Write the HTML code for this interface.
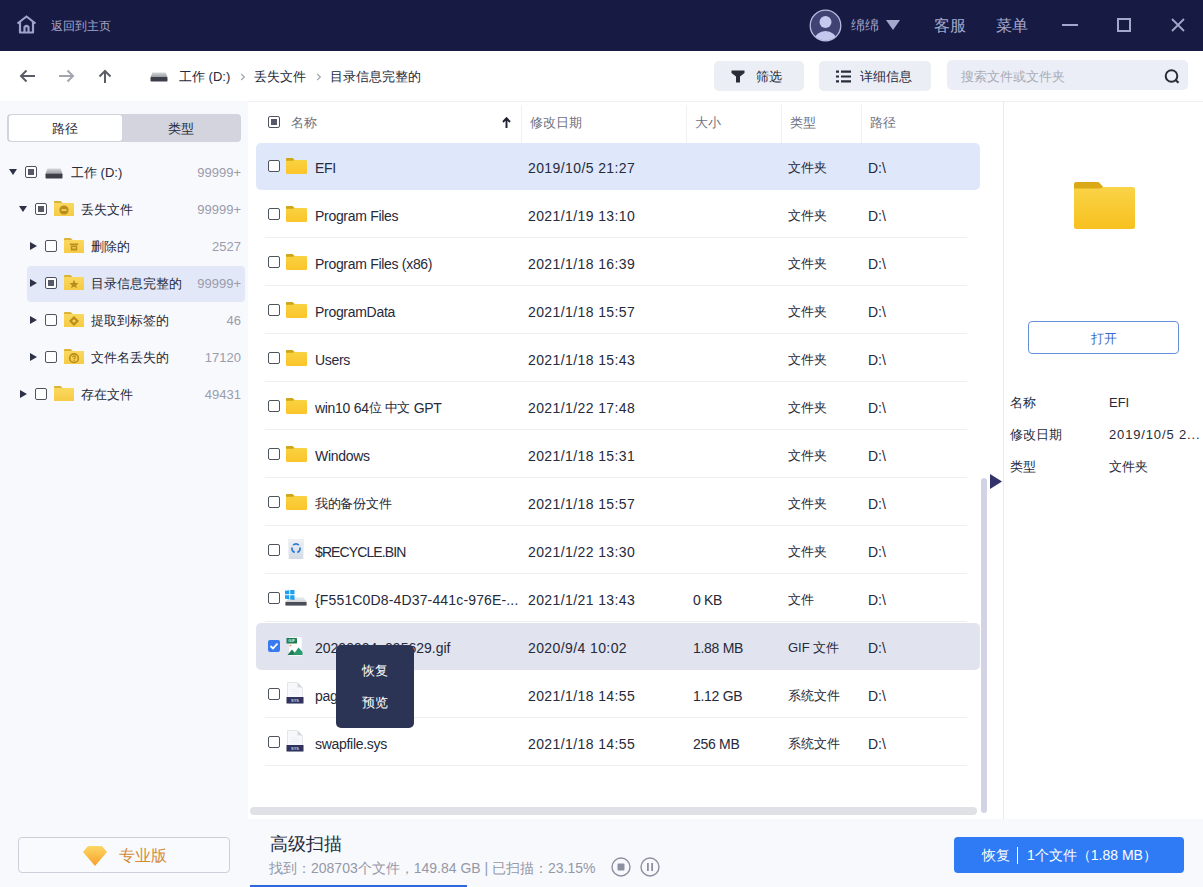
<!DOCTYPE html>
<html><head><meta charset="utf-8">
<style>
*{margin:0;padding:0;box-sizing:border-box}
html,body{width:1203px;height:887px;overflow:hidden;background:#fff;font-family:"Liberation Sans",sans-serif;color:#262a3a}
.abs{position:absolute}
.t{position:absolute;white-space:nowrap}
#hdr{position:absolute;left:0;top:0;width:1203px;height:51px;background:#171b43}
.ht{position:absolute;color:#a4a7cc;white-space:nowrap}
#tb{position:absolute;left:0;top:51px;width:1203px;height:50px;background:#fff}
#left{position:absolute;left:0;top:101px;width:248px;height:719px;background:#f8f9fd}
#main{position:absolute;left:248px;top:101px;width:755px;height:718px;background:#fff}
#topline{position:absolute;left:248px;top:101px;width:955px;height:1px;background:#eef0f4}
#right{position:absolute;left:1003px;top:101px;width:200px;height:718px;background:#fff;border-left:1px solid #e8eaf0;border-top:1px solid #eef0f4}
#bot{position:absolute;left:0;top:819px;width:1203px;height:68px;background:#f7f9fd}
.btn{position:absolute;background:#eceef5;border-radius:5px}
.cb{position:absolute;width:12px;height:12px;border:1.5px solid #4f535d;border-radius:2px;background:#fff}
.cb.p::after{content:"";position:absolute;left:1.5px;top:1.5px;width:6px;height:6px;background:#555a66}
.tri-d{position:absolute;width:0;height:0;border-left:4.5px solid transparent;border-right:4.5px solid transparent;border-top:6px solid #2e3247}
.tri-r{position:absolute;width:0;height:0;border-top:4px solid transparent;border-bottom:4px solid transparent;border-left:7px solid #2e3247}
.tr{position:absolute;font-size:13px;line-height:37px;height:37px;white-space:nowrap}
.cnt{position:absolute;right:7px;font-size:13px;color:#9a9cab;line-height:37px;text-align:right}
.row{position:absolute;left:0;width:755px;height:48px}
.row .c{position:absolute;white-space:nowrap;line-height:48px;font-size:14px;top:1px}
.row .dt{letter-spacing:0.4px}
.row .ty{font-size:13px}
.row .sz{letter-spacing:-0.3px}
.z{font-size:13px;position:relative;top:-1.5px}
.row .nm{letter-spacing:-0.3px}
.sep{position:absolute;left:17px;width:702px;height:1px;background:#eceef2}
.colsep{position:absolute;top:4px;width:1px;height:38px;background:#f0f1f5}
.hd{position:absolute;top:1px;line-height:42px;font-size:13px;color:#6e7180;white-space:nowrap}
</style></head><body>
<svg width="0" height="0" style="position:absolute"><defs><linearGradient id="dvg" x1="0" y1="0" x2="0" y2="1"><stop offset="0" stop-color="#d6d7da"/><stop offset="1" stop-color="#9c9ea4"/></linearGradient><linearGradient id="tfg" x1="0" y1="0" x2="0" y2="1"><stop offset="0" stop-color="#fada62"/><stop offset="1" stop-color="#f6cb45"/></linearGradient><linearGradient id="fg" x1="0" y1="0" x2="0" y2="1"><stop offset="0" stop-color="#f8d444"/><stop offset="1" stop-color="#fcc42a"/></linearGradient></defs></svg>
<div id="hdr">
  <svg class="abs" style="left:16px;top:15px" width="21" height="19" viewBox="0 0 21 19">
    <path d="M1.5 8.5 L10.5 1.5 L19.5 8.5 M4 7 V17.5 H17 V7 M8.5 17.5 V12 Q10.5 10 12.5 12 V17.5" fill="none" stroke="#9fa2cb" stroke-width="2.2" stroke-linejoin="round"/>
  </svg>
  <div class="ht" style="left:51px;top:18px;font-size:12px">返回到主页</div>
  <svg class="abs" style="left:809px;top:9px" width="33" height="33" viewBox="0 0 33 33">
    <defs><clipPath id="av"><circle cx="16.5" cy="16.5" r="15"/></clipPath></defs>
    <circle cx="16.5" cy="16.5" r="15.3" fill="#3f4273" stroke="#b9bce0" stroke-width="1.3"/>
    <g clip-path="url(#av)"><circle cx="16.5" cy="13" r="6" fill="#c5c8ee"/><ellipse cx="16.5" cy="31" rx="11" ry="9" fill="#c5c8ee"/></g>
  </svg>
  <div class="ht" style="left:851px;top:17px;font-size:14px">绵绵</div>
  <svg class="abs" style="left:886px;top:20px" width="14" height="11"><path d="M0 0 H14 L7 10 Z" fill="#a4a7cc"/></svg>
  <div class="ht" style="left:934px;top:16px;font-size:16px">客服</div>
  <div class="ht" style="left:996px;top:16px;font-size:16px">菜单</div>
  <div class="abs" style="left:1062px;top:24px;width:16px;height:2px;background:#a4a7cc"></div>
  <div class="abs" style="left:1117px;top:18px;width:14px;height:14px;border:2px solid #a4a7cc"></div>
  <svg class="abs" style="left:1171px;top:18px" width="14" height="14"><path d="M1 1 L13 13 M13 1 L1 13" stroke="#a4a7cc" stroke-width="1.8"/></svg>
</div>

<div id="tb">
  <svg class="abs" style="left:19px;top:18px" width="17" height="14" viewBox="0 0 17 14"><path d="M16 7 H2 M7.5 1.5 L2 7 L7.5 12.5" fill="none" stroke="#5a5d68" stroke-width="2"/></svg>
  <svg class="abs" style="left:58px;top:18px" width="17" height="14" viewBox="0 0 17 14"><path d="M1 7 H15 M9.5 1.5 L15 7 L9.5 12.5" fill="none" stroke="#a3a5ae" stroke-width="2"/></svg>
  <svg class="abs" style="left:97px;top:18px" width="16" height="14" viewBox="0 0 16 14"><path d="M8 14 V2 M2.5 7.5 L8 2 L13.5 7.5" fill="none" stroke="#5a5d68" stroke-width="2"/></svg>
  <svg class="abs" style="left:150px;top:21px" width="18" height="10" viewBox="0 0 18 10"><path d="M2.5 0.5 H15.5 L17.5 5 H0.5 Z" fill="url(#dvg)"/><rect x="0.5" y="5" width="17" height="4.5" rx="0.8" fill="#3c3f48"/></svg>
  <div class="t" style="left:179px;top:17px;font-size:13px;line-height:18px">工作 (D:)</div>
  <svg class="abs" style="left:240px;top:22px" width="6" height="8"><path d="M1.2 1 L4.3 4 L1.2 7" fill="none" stroke="#a3a5ae" stroke-width="1.2"/></svg>
  <div class="t" style="left:254px;top:17px;font-size:13px;line-height:18px">丢失文件</div>
  <svg class="abs" style="left:316px;top:22px" width="6" height="8"><path d="M1.2 1 L4.3 4 L1.2 7" fill="none" stroke="#a3a5ae" stroke-width="1.2"/></svg>
  <div class="t" style="left:330px;top:17px;font-size:13px;line-height:18px">目录信息完整的</div>

  <div class="btn" style="left:714px;top:10px;width:90px;height:30px"></div>
  <svg class="abs" style="left:731px;top:19px" width="14" height="13" viewBox="0 0 14 13"><path d="M0.5 0.5 H13.5 V3 L9 6.5 V12.5 H5 V6.5 L0.5 3 Z" fill="#2a2d38"/></svg>
  <div class="t" style="left:756px;top:17px;font-size:13px;line-height:18px">筛选</div>
  <div class="btn" style="left:819px;top:10px;width:112px;height:30px"></div>
  <svg class="abs" style="left:836px;top:19px" width="15" height="13" viewBox="0 0 15 13"><path d="M0 0.5h3v2.2h-3zM5 0.5h10v2.2h-10zM0 5.4h3v2.2h-3zM5 5.4h10v2.2h-10zM0 10.3h3v2.2h-3zM5 10.3h10v2.2h-10z" fill="#2a2d38"/></svg>
  <div class="t" style="left:860px;top:17px;font-size:13px;line-height:18px">详细信息</div>
  <div class="btn" style="left:947px;top:9px;width:241px;height:30px;background:#ebeef6"></div>
  <div class="t" style="left:961px;top:17px;font-size:13px;line-height:18px;color:#a9acb8">搜索文件或文件夹</div>
  <svg class="abs" style="left:1164px;top:18px" width="17" height="15" viewBox="0 0 17 15"><circle cx="7.5" cy="7" r="5.8" fill="none" stroke="#2a2d38" stroke-width="2"/><path d="M11.5 11 L14.5 13.8" stroke="#2a2d38" stroke-width="2.2"/></svg>
</div>

<div id="left">
  <div class="abs" style="left:7px;top:13px;width:234px;height:28px;background:#d3d4dd;border-radius:4px"></div>
  <div class="abs" style="left:9px;top:14px;width:113px;height:26px;background:#fff;border-radius:3px"></div>
  <div class="t" style="left:52px;top:19px;font-size:13px;line-height:18px;color:#262a3a">路径</div>
  <div class="t" style="left:168px;top:19px;font-size:13px;line-height:18px;color:#262a3a">类型</div>

  <div class="abs" style="left:27px;top:165px;width:218px;height:36px;background:#e3e8f8;border-radius:4px"></div>

  <!-- tree rows: centers 172,209,246,283,320,357,394 (abs) => local 71,108,... -->
  <div class="tri-d" style="left:9px;top:68px"></div>
  <div class="cb p" style="left:25px;top:65px"></div>
  <svg class="abs" style="left:45px;top:67px" width="18" height="11" viewBox="0 0 18 11"><path d="M2.5 0.5 H15.5 L17.5 5.5 H0.5 Z" fill="url(#dvg)"/><rect x="0.5" y="5.5" width="17" height="5" rx="0.8" fill="#3c3f48"/></svg>
  <div class="tr" style="left:71px;top:53px">工作 (D:)</div>
  <div class="cnt" style="top:53px">99999+</div>

  <div class="tri-d" style="left:19px;top:105px"></div>
  <div class="cb p" style="left:35px;top:102px"></div>
  <svg class="abs" style="left:54px;top:100px" width="20" height="15" viewBox="0 0 20 15"><path d="M0 1 Q0 0 1 0 H6.5 L8.5 2 H19 Q20 2 20 3 V15 H0 Z" fill="url(#tfg)"/><path d="M0 1 Q0 0 1 0 H6.5 L8.5 2 H0 Z" fill="#dcb33a"/><circle cx="10" cy="9" r="4.6" fill="#b98c1c"/><rect x="7.4" y="8.2" width="5.2" height="1.6" fill="#f9d55c"/></svg>
  <div class="tr" style="left:81px;top:90px">丢失文件</div>
  <div class="cnt" style="top:90px">99999+</div>

  <div class="tri-r" style="left:30px;top:141px"></div>
  <div class="cb" style="left:45px;top:139px"></div>
  <svg class="abs" style="left:64px;top:137px" width="20" height="15" viewBox="0 0 20 15"><path d="M0 1 Q0 0 1 0 H6.5 L8.5 2 H19 Q20 2 20 3 V15 H0 Z" fill="url(#tfg)"/><path d="M0 1 Q0 0 1 0 H6.5 L8.5 2 H0 Z" fill="#dcb33a"/><rect x="5.8" y="5.5" width="8.4" height="1.6" fill="#b98c1c"/><path d="M6.8 7.6 H13.2 V12.5 H6.8 Z" fill="#b98c1c"/><rect x="8.2" y="9.2" width="3.6" height="1.3" fill="#f9d55c"/></svg>
  <div class="tr" style="left:91px;top:127px">删除的</div>
  <div class="cnt" style="top:127px">2527</div>

  <div class="tri-r" style="left:30px;top:178px"></div>
  <div class="cb p" style="left:45px;top:176px"></div>
  <svg class="abs" style="left:64px;top:174px" width="20" height="15" viewBox="0 0 20 15"><path d="M0 1 Q0 0 1 0 H6.5 L8.5 2 H19 Q20 2 20 3 V15 H0 Z" fill="url(#tfg)"/><path d="M0 1 Q0 0 1 0 H6.5 L8.5 2 H0 Z" fill="#dcb33a"/><path d="M10 4.8 L11.4 7.9 L14.6 8.1 L12.1 10.2 L12.9 13.3 L10 11.6 L7.1 13.3 L7.9 10.2 L5.4 8.1 L8.6 7.9 Z" fill="#b98c1c"/></svg>
  <div class="tr" style="left:91px;top:164px">目录信息完整的</div>
  <div class="cnt" style="top:164px">99999+</div>

  <div class="tri-r" style="left:30px;top:215px"></div>
  <div class="cb" style="left:45px;top:213px"></div>
  <svg class="abs" style="left:64px;top:211px" width="20" height="15" viewBox="0 0 20 15"><path d="M0 1 Q0 0 1 0 H6.5 L8.5 2 H19 Q20 2 20 3 V15 H0 Z" fill="url(#tfg)"/><path d="M0 1 Q0 0 1 0 H6.5 L8.5 2 H0 Z" fill="#dcb33a"/><path d="M10 4 L15 9 L10 14 L5 9 Z" fill="#b98c1c"/><circle cx="10" cy="9" r="1.6" fill="#f9d55c"/></svg>
  <div class="tr" style="left:91px;top:201px">提取到标签的</div>
  <div class="cnt" style="top:201px">46</div>

  <div class="tri-r" style="left:30px;top:252px"></div>
  <div class="cb" style="left:45px;top:250px"></div>
  <svg class="abs" style="left:64px;top:248px" width="20" height="15" viewBox="0 0 20 15"><path d="M0 1 Q0 0 1 0 H6.5 L8.5 2 H19 Q20 2 20 3 V15 H0 Z" fill="url(#tfg)"/><path d="M0 1 Q0 0 1 0 H6.5 L8.5 2 H0 Z" fill="#dcb33a"/><circle cx="10" cy="9.2" r="4.3" fill="none" stroke="#b98c1c" stroke-width="1.6"/><path d="M8.6 8.2 Q8.6 6.9 10 6.9 Q11.4 6.9 11.4 8.1 Q11.4 9 10.1 9.6 V10.4" fill="none" stroke="#b98c1c" stroke-width="1.2"/><rect x="9.5" y="11" width="1.2" height="1.2" fill="#b98c1c"/></svg>
  <div class="tr" style="left:91px;top:238px">文件名丢失的</div>
  <div class="cnt" style="top:238px">17120</div>

  <div class="tri-r" style="left:20px;top:289px"></div>
  <div class="cb" style="left:35px;top:287px"></div>
  <svg class="abs" style="left:54px;top:285px" width="20" height="15" viewBox="0 0 20 15"><path d="M0 1 Q0 0 1 0 H6.5 L8.5 2 H19 Q20 2 20 3 V15 H0 Z" fill="url(#tfg)"/><path d="M0 1 Q0 0 1 0 H6.5 L8.5 2 H0 Z" fill="#dcb33a"/></svg>
  <div class="tr" style="left:81px;top:275px">存在文件</div>
  <div class="cnt" style="top:275px">49431</div>
</div>

<div id="main">
  <div class="cb p" style="left:20px;top:15px"></div>
  <div class="hd" style="left:43px">名称</div>
  <svg class="abs" style="left:254px;top:16px" width="9" height="11" viewBox="0 0 9 11"><path d="M4.5 11 V2 M1 5 L4.5 1.2 L8 5" fill="none" stroke="#1e2130" stroke-width="1.9"/></svg>
  <div class="colsep" style="left:273px"></div>
  <div class="hd" style="left:282px">修改日期</div>
  <div class="colsep" style="left:438px"></div>
  <div class="hd" style="left:447px">大小</div>
  <div class="colsep" style="left:533px"></div>
  <div class="hd" style="left:542px">类型</div>
  <div class="colsep" style="left:613px"></div>
  <div class="hd" style="left:622px">路径</div>
<div class="sep" style="top:88px"></div><div class="sep" style="top:136px"></div><div class="sep" style="top:184px"></div><div class="sep" style="top:232px"></div><div class="sep" style="top:280px"></div><div class="sep" style="top:328px"></div><div class="sep" style="top:376px"></div><div class="sep" style="top:424px"></div><div class="sep" style="top:472px"></div><div class="sep" style="top:520px"></div><div class="sep" style="top:568px"></div><div class="sep" style="top:616px"></div><div class="sep" style="top:664px"></div>

<div class="row" style="top:42px"><div class="abs" style="left:8px;top:0;width:724px;height:47px;background:#dfe7fb;border-radius:5px"></div><div class="cb" style="left:20px;top:17px"></div><svg class="abs" style="left:38px;top:15px" width="21" height="16" viewBox="0 0 21 16"><path d="M0 1.2 Q0 0 1.2 0 H6.5 L8.5 2 H19.8 Q21 2 21 3.2 V14.8 Q21 16 19.8 16 H1.2 Q0 16 0 14.8 Z" fill="url(#fg)"/><path d="M0 1.2 Q0 0 1.2 0 H6.5 L8.5 2 Q7.5 2.8 6.5 2.8 H0 Z" fill="#cfa51a"/></svg><div class="c nm" style="left:67px">EFI</div><div class="c dt" style="left:280px">2019/10/5 21:27</div><div class="c sz" style="left:445px"></div><div class="c ty" style="left:540px">文件夹</div><div class="c pa" style="left:620px">D:\</div></div>
<div class="row" style="top:90px"><div class="cb" style="left:20px;top:17px"></div><svg class="abs" style="left:38px;top:15px" width="21" height="16" viewBox="0 0 21 16"><path d="M0 1.2 Q0 0 1.2 0 H6.5 L8.5 2 H19.8 Q21 2 21 3.2 V14.8 Q21 16 19.8 16 H1.2 Q0 16 0 14.8 Z" fill="url(#fg)"/><path d="M0 1.2 Q0 0 1.2 0 H6.5 L8.5 2 Q7.5 2.8 6.5 2.8 H0 Z" fill="#cfa51a"/></svg><div class="c nm" style="left:67px">Program Files</div><div class="c dt" style="left:280px">2021/1/19 13:10</div><div class="c sz" style="left:445px"></div><div class="c ty" style="left:540px">文件夹</div><div class="c pa" style="left:620px">D:\</div></div>
<div class="row" style="top:138px"><div class="cb" style="left:20px;top:17px"></div><svg class="abs" style="left:38px;top:15px" width="21" height="16" viewBox="0 0 21 16"><path d="M0 1.2 Q0 0 1.2 0 H6.5 L8.5 2 H19.8 Q21 2 21 3.2 V14.8 Q21 16 19.8 16 H1.2 Q0 16 0 14.8 Z" fill="url(#fg)"/><path d="M0 1.2 Q0 0 1.2 0 H6.5 L8.5 2 Q7.5 2.8 6.5 2.8 H0 Z" fill="#cfa51a"/></svg><div class="c nm" style="left:67px">Program Files (x86)</div><div class="c dt" style="left:280px">2021/1/18 16:39</div><div class="c sz" style="left:445px"></div><div class="c ty" style="left:540px">文件夹</div><div class="c pa" style="left:620px">D:\</div></div>
<div class="row" style="top:186px"><div class="cb" style="left:20px;top:17px"></div><svg class="abs" style="left:38px;top:15px" width="21" height="16" viewBox="0 0 21 16"><path d="M0 1.2 Q0 0 1.2 0 H6.5 L8.5 2 H19.8 Q21 2 21 3.2 V14.8 Q21 16 19.8 16 H1.2 Q0 16 0 14.8 Z" fill="url(#fg)"/><path d="M0 1.2 Q0 0 1.2 0 H6.5 L8.5 2 Q7.5 2.8 6.5 2.8 H0 Z" fill="#cfa51a"/></svg><div class="c nm" style="left:67px">ProgramData</div><div class="c dt" style="left:280px">2021/1/18 15:57</div><div class="c sz" style="left:445px"></div><div class="c ty" style="left:540px">文件夹</div><div class="c pa" style="left:620px">D:\</div></div>
<div class="row" style="top:234px"><div class="cb" style="left:20px;top:17px"></div><svg class="abs" style="left:38px;top:15px" width="21" height="16" viewBox="0 0 21 16"><path d="M0 1.2 Q0 0 1.2 0 H6.5 L8.5 2 H19.8 Q21 2 21 3.2 V14.8 Q21 16 19.8 16 H1.2 Q0 16 0 14.8 Z" fill="url(#fg)"/><path d="M0 1.2 Q0 0 1.2 0 H6.5 L8.5 2 Q7.5 2.8 6.5 2.8 H0 Z" fill="#cfa51a"/></svg><div class="c nm" style="left:67px">Users</div><div class="c dt" style="left:280px">2021/1/18 15:43</div><div class="c sz" style="left:445px"></div><div class="c ty" style="left:540px">文件夹</div><div class="c pa" style="left:620px">D:\</div></div>
<div class="row" style="top:282px"><div class="cb" style="left:20px;top:17px"></div><svg class="abs" style="left:38px;top:15px" width="21" height="16" viewBox="0 0 21 16"><path d="M0 1.2 Q0 0 1.2 0 H6.5 L8.5 2 H19.8 Q21 2 21 3.2 V14.8 Q21 16 19.8 16 H1.2 Q0 16 0 14.8 Z" fill="url(#fg)"/><path d="M0 1.2 Q0 0 1.2 0 H6.5 L8.5 2 Q7.5 2.8 6.5 2.8 H0 Z" fill="#cfa51a"/></svg><div class="c nm" style="left:67px">win10 64<span class="z">位 中文</span> GPT</div><div class="c dt" style="left:280px">2021/1/22 17:48</div><div class="c sz" style="left:445px"></div><div class="c ty" style="left:540px">文件夹</div><div class="c pa" style="left:620px">D:\</div></div>
<div class="row" style="top:330px"><div class="cb" style="left:20px;top:17px"></div><svg class="abs" style="left:38px;top:15px" width="21" height="16" viewBox="0 0 21 16"><path d="M0 1.2 Q0 0 1.2 0 H6.5 L8.5 2 H19.8 Q21 2 21 3.2 V14.8 Q21 16 19.8 16 H1.2 Q0 16 0 14.8 Z" fill="url(#fg)"/><path d="M0 1.2 Q0 0 1.2 0 H6.5 L8.5 2 Q7.5 2.8 6.5 2.8 H0 Z" fill="#cfa51a"/></svg><div class="c nm" style="left:67px">Windows</div><div class="c dt" style="left:280px">2021/1/18 15:31</div><div class="c sz" style="left:445px"></div><div class="c ty" style="left:540px">文件夹</div><div class="c pa" style="left:620px">D:\</div></div>
<div class="row" style="top:378px"><div class="cb" style="left:20px;top:17px"></div><svg class="abs" style="left:38px;top:15px" width="21" height="16" viewBox="0 0 21 16"><path d="M0 1.2 Q0 0 1.2 0 H6.5 L8.5 2 H19.8 Q21 2 21 3.2 V14.8 Q21 16 19.8 16 H1.2 Q0 16 0 14.8 Z" fill="url(#fg)"/><path d="M0 1.2 Q0 0 1.2 0 H6.5 L8.5 2 Q7.5 2.8 6.5 2.8 H0 Z" fill="#cfa51a"/></svg><div class="c nm" style="left:67px"><span class="z">我的备份文件</span></div><div class="c dt" style="left:280px">2021/1/18 15:57</div><div class="c sz" style="left:445px"></div><div class="c ty" style="left:540px">文件夹</div><div class="c pa" style="left:620px">D:\</div></div>
<div class="row" style="top:426px"><div class="cb" style="left:20px;top:17px"></div><svg class="abs" style="left:40px;top:12px" width="16" height="20" viewBox="0 0 16 20"><defs><linearGradient id="rg" x1="0" y1="0" x2="0" y2="1"><stop offset="0" stop-color="#eef2f6"/><stop offset="1" stop-color="#d3dae3"/></linearGradient></defs><path d="M0 0 H16 L15.2 20 H0.8 Z" fill="url(#rg)"/><path d="M5.2 6.2 A3.8 3.8 0 0 1 10.8 6.2" fill="none" stroke="#2f7ad8" stroke-width="1.8"/><path d="M11.9 8.6 A3.8 3.8 0 0 1 9.3 13.3" fill="none" stroke="#2f7ad8" stroke-width="1.8"/><path d="M6.7 13.3 A3.8 3.8 0 0 1 4.1 8.6" fill="none" stroke="#2f7ad8" stroke-width="1.8"/></svg><div class="c nm" style="left:67px;letter-spacing:-0.9px">$RECYCLE.BIN</div><div class="c dt" style="left:280px">2021/1/22 13:30</div><div class="c sz" style="left:445px"></div><div class="c ty" style="left:540px">文件夹</div><div class="c pa" style="left:620px">D:\</div></div>
<div class="row" style="top:474px"><div class="cb" style="left:20px;top:17px"></div><svg class="abs" style="left:37px;top:15px" width="22" height="16" viewBox="0 0 22 16"><defs><linearGradient id="wg" x1="0" y1="0" x2="0" y2="1"><stop offset="0" stop-color="#f0f1f3"/><stop offset="1" stop-color="#b9bcc2"/></linearGradient></defs><path d="M5 7 H18 L21.5 11.5 V15.5 H0.5 V11.5 Z" fill="url(#wg)"/><path d="M0.5 12 H21.5 V15.5 H0.5Z" fill="#4a4d55"/><path d="M0 0.8 L4.3 0.2 V4.3 H0Z M5.2 0.1 L9.5 -0.5 V4.3 H5.2Z M0 5.2 H4.3 V9.3 L0 8.8Z M5.2 5.2 H9.5 V10 L5.2 9.4Z" fill="#1ea0f0"/></svg><div class="c nm" style="left:67px;letter-spacing:0.15px">{F551C0D8-4D37-441c-976E-...</div><div class="c dt" style="left:280px">2021/1/21 13:43</div><div class="c sz" style="left:445px">0 KB</div><div class="c ty" style="left:540px">文件</div><div class="c pa" style="left:620px">D:\</div></div>
<div class="row" style="top:522px"><div class="abs" style="left:8px;top:0;width:724px;height:47px;background:#e1e3ee;border-radius:5px"></div><svg class="abs" style="left:20px;top:17px" width="12" height="12" viewBox="0 0 12 12"><rect width="12" height="12" rx="2" fill="#3a7af0"/><path d="M2.5 6 L5 8.5 L9.5 3.5" fill="none" stroke="#fff" stroke-width="1.8"/></svg><svg class="abs" style="left:37px;top:13px" width="20" height="21" viewBox="0 0 20 21"><path d="M4 1 H17 V20 H4Z" fill="#fff" stroke="#e4e6ec" stroke-width="0.7"/><rect x="1.5" y="2" width="10.5" height="5.5" rx="0.6" fill="#1f7d55"/><text x="6.7" y="6.3" font-size="4" font-weight="bold" fill="#d9efe4" text-anchor="middle" font-family="Liberation Sans">GIF</text><circle cx="5.5" cy="9.5" r="1" fill="#f39a6b"/><path d="M2.5 19 L7 13.5 L11.5 19Z" fill="#1f7d55"/><path d="M8 19 L13.5 11.5 L17.5 16 V19Z" fill="#2a9a6c"/></svg><div class="c nm" style="left:67px;letter-spacing:0px">20200904_095629.gif</div><div class="c dt" style="left:280px">2020/9/4 10:02</div><div class="c sz" style="left:445px">1.88 MB</div><div class="c ty" style="left:540px">GIF 文件</div><div class="c pa" style="left:620px">D:\</div></div>
<div class="row" style="top:570px"><div class="cb" style="left:20px;top:17px"></div><svg class="abs" style="left:37px;top:11px" width="20" height="22" viewBox="0 0 20 22"><path d="M2.5 0.5 H12.5 L17.5 5.5 V21 H2.5 Z" fill="#f7f8fa" stroke="#dfe1e6" stroke-width="0.8"/><path d="M12.5 0.5 V5.5 H17.5Z" fill="#d5d8de"/><path d="M6 7.5 H14 M6 9.5 H14 M6 11.5 H14" stroke="#eceef2" stroke-width="0.8"/><rect x="1.5" y="15" width="17" height="6.5" fill="#30335e"/><text x="10" y="19.8" font-size="4" font-weight="bold" fill="#c9cbe0" text-anchor="middle" font-family="Liberation Sans">SYS</text></svg><div class="c nm" style="left:67px">pagefile.sys</div><div class="c dt" style="left:280px">2021/1/18 14:55</div><div class="c sz" style="left:445px">1.12 GB</div><div class="c ty" style="left:540px">系统文件</div><div class="c pa" style="left:620px">D:\</div></div>
<div class="row" style="top:618px"><div class="cb" style="left:20px;top:17px"></div><svg class="abs" style="left:37px;top:11px" width="20" height="22" viewBox="0 0 20 22"><path d="M2.5 0.5 H12.5 L17.5 5.5 V21 H2.5 Z" fill="#f7f8fa" stroke="#dfe1e6" stroke-width="0.8"/><path d="M12.5 0.5 V5.5 H17.5Z" fill="#d5d8de"/><path d="M6 7.5 H14 M6 9.5 H14 M6 11.5 H14" stroke="#eceef2" stroke-width="0.8"/><rect x="1.5" y="15" width="17" height="6.5" fill="#30335e"/><text x="10" y="19.8" font-size="4" font-weight="bold" fill="#c9cbe0" text-anchor="middle" font-family="Liberation Sans">SYS</text></svg><div class="c nm" style="left:67px">swapfile.sys</div><div class="c dt" style="left:280px">2021/1/18 14:55</div><div class="c sz" style="left:445px">256 MB</div><div class="c ty" style="left:540px">系统文件</div><div class="c pa" style="left:620px">D:\</div></div>
  <div class="abs" style="left:733px;top:377px;width:6px;height:335px;background:#d3d3e6;border-radius:3px"></div>
  <div class="abs" style="left:2px;top:706px;width:727px;height:8px;background:#dfe1e6;border-radius:4px"></div>
  <svg class="abs" style="left:742px;top:373px" width="13" height="15" viewBox="0 0 13 15"><path d="M0 0 L12 7.5 L0 15Z" fill="#33336a"/></svg>
</div>
<div id="right">
  <svg class="abs" style="left:70px;top:80px" width="61" height="47" viewBox="0 0 61 47"><defs><linearGradient id="bfg" x1="0" y1="0" x2="0" y2="1"><stop offset="0" stop-color="#fad54c"/><stop offset="1" stop-color="#f7c11f"/></linearGradient></defs><path d="M0 2.5 Q0 0 2.5 0 H23 Q24.5 0 25.5 1 L29 5 H58.5 Q61 5 61 7.5 V44.5 Q61 47 58.5 47 H2.5 Q0 47 0 44.5 Z" fill="url(#bfg)"/><path d="M0 2.5 Q0 0 2.5 0 H23 Q24.5 0 25.5 1 L29 5 Q27 6.5 25 6.5 H0 Z" fill="#dba917"/></svg>
  <div class="abs" style="left:24px;top:219px;width:151px;height:33px;border:1px solid #6590d8;border-radius:4px;background:#fff"></div>
  <div class="t" style="left:24px;top:220px;width:151px;line-height:33px;text-align:center;font-size:13px;color:#3b6bc6">打开</div>
  <div class="t" style="left:6px;top:291px;font-size:13px;line-height:20px">名称</div>
  <div class="t" style="left:105px;top:291px;font-size:13px;line-height:20px">EFI</div>
  <div class="t" style="left:6px;top:323px;font-size:13px;line-height:20px">修改日期</div>
  <div class="t" style="left:105px;top:323px;font-size:13px;line-height:20px;letter-spacing:0.85px">2019/10/5 2...</div>
  <div class="t" style="left:6px;top:355px;font-size:13px;line-height:20px">类型</div>
  <div class="t" style="left:105px;top:355px;font-size:13px;line-height:20px">文件夹</div>
</div>
<div id="topline"></div>
<div id="bot">
  <div class="abs" style="left:18px;top:18px;width:212px;height:36px;border:1px solid #cdd0da;border-radius:4px;background:#f9fafe"></div>
  <svg class="abs" style="left:83px;top:27px" width="24" height="20" viewBox="0 0 24 20"><defs><linearGradient id="dg" x1="0" y1="0" x2="0" y2="1"><stop offset="0" stop-color="#fdd764"/><stop offset="1" stop-color="#f6a02a"/></linearGradient></defs><path d="M5 0 H19 L24 6 L12 20 L0 6 Z" fill="url(#dg)"/></svg>
  <div class="t" style="left:119px;top:26px;font-size:16px;line-height:22px;color:#d38b3a">专业版</div>
  <div class="t" style="left:270px;top:13px;font-size:18px;line-height:24px;color:#262a3a">高级扫描</div>
  <div class="t" style="left:269px;top:39px;font-size:14px;line-height:20px;color:#9598a7">找到：208703个文件，149.84 GB | 已扫描：23.15%</div>
  <svg class="abs" style="left:611px;top:38px" width="20" height="20" viewBox="0 0 20 20"><circle cx="10" cy="10" r="9" fill="none" stroke="#8d90a0" stroke-width="1.4"/><rect x="6.5" y="6.5" width="7" height="7" rx="1" fill="#8d90a0"/></svg>
  <svg class="abs" style="left:640px;top:38px" width="20" height="20" viewBox="0 0 20 20"><circle cx="10" cy="10" r="9" fill="none" stroke="#8d90a0" stroke-width="1.4"/><rect x="7" y="6" width="1.8" height="8" fill="#8d90a0"/><rect x="11.2" y="6" width="1.8" height="8" fill="#8d90a0"/></svg>
  <div class="abs" style="left:250px;top:66px;width:217px;height:3px;background:#2b6bd9"></div>
  <div class="abs" style="left:954px;top:18px;width:230px;height:36px;background:#2f7bf6;border-radius:4px"></div>
  <div class="t" style="left:982px;top:26px;font-size:14px;line-height:20px;color:#fff">恢复</div>
  <div class="abs" style="left:1017px;top:28px;width:1px;height:17px;background:#fff"></div>
  <div class="t" style="left:1027px;top:26px;font-size:14px;line-height:20px;color:#fff">1个文件（1.88 MB）</div>
</div>
<div class="abs" style="left:336px;top:645px;width:78px;height:83px;background:#2b3454;border-radius:5px"></div>
<div class="t" style="left:336px;top:661px;width:78px;text-align:center;font-size:13px;line-height:20px;color:#fff">恢复</div>
<div class="t" style="left:336px;top:693px;width:78px;text-align:center;font-size:13px;line-height:20px;color:#fff">预览</div>

</body></html>
